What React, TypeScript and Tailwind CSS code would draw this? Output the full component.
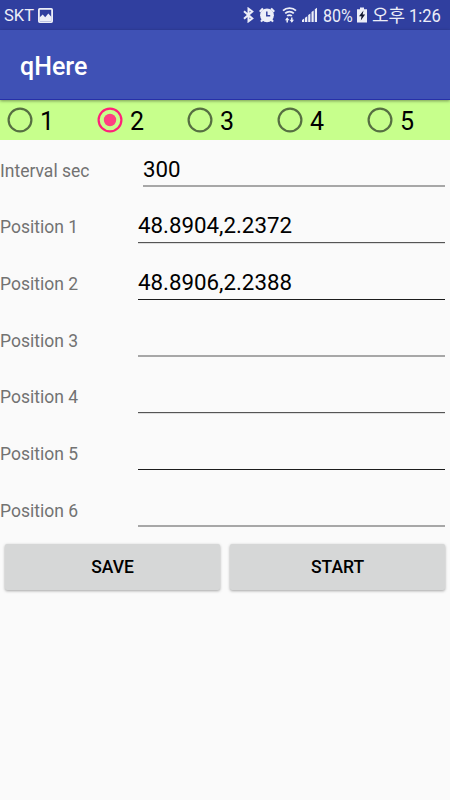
import clsx from 'clsx';

const options = [1, 2, 3, 4, 5];

const fields = [
  { label: 'Interval sec', value: '300', line: 'border-b-2 border-[#a7a7a7]', inset: true },
  { label: 'Position 1', value: '48.8904,2.2372', line: 'border-b border-[#555555] shadow-[0_1px_0_#dddddd]' },
  { label: 'Position 2', value: '48.8906,2.2388', line: 'border-b border-[#1c1c1c]' },
  { label: 'Position 3', value: '', line: 'border-b-2 border-[#a7a7a7]' },
  { label: 'Position 4', value: '', line: 'border-b border-[#555555] shadow-[0_1px_0_#dddddd]' },
  { label: 'Position 5', value: '', line: 'border-b border-[#1c1c1c]' },
  { label: 'Position 6', value: '', line: 'border-b-2 border-[#a7a7a7]' },
];

const StatusBar = () => (
  <div className="flex h-[30px] items-center bg-[#303f9f] pl-1 pr-[9px] text-[17px] text-[#eceef8]">
    <span className="pt-[2px] text-[16.5px]">SKT</span>
    <svg className="ml-1 h-[15px] w-[15px]" viewBox="0 0 15 15">
      <rect x="0.9" y="0.9" width="13.2" height="13.2" rx="0.8" fill="none" stroke="currentColor" strokeWidth="1.8" />
      <path d="M1.5 13V9.5L4.7 6.5l2.5 2.7L10.3 5.5l3.2 3.5v4z" fill="currentColor" />
    </svg>
    <div className="ml-auto flex items-center">
      <svg className="h-4 w-[11px]" viewBox="0 0 11 16" fill="none" stroke="currentColor" strokeWidth="2">
        <path d="M1 4.3 9.3 11.5 5.5 14.3V1.7L9.3 4.5 1 11.7" />
      </svg>
      <svg className="ml-[5px] h-4 w-4" viewBox="0 0 16 16">
        <circle cx="8" cy="8.3" r="6.9" fill="currentColor" />
        <path d="M.8 4.8 4 1.4M12 1.4l3.2 3.4M3.7 12.6l-1.7 2M12.3 12.6l1.7 2" stroke="currentColor" strokeWidth="2.2" />
        <path d="M7.8 4.6v4.2h3.4" fill="none" stroke="#303f9f" strokeWidth="1.5" />
      </svg>
      <svg className="ml-[7px] h-4 w-[15px]" viewBox="0 0 15 16" fill="none" stroke="currentColor" strokeWidth="1.8">
        <path d="M1 3.6C4.5.2 10.5.2 14 3.6M3.2 6.4c2.4-2.4 6.2-2.4 8.6 0M5.2 9c1.2-1.3 3.4-1.3 4.6 0" />
        <path d="M5.2 11.5v4M9.8 10.5v4" strokeWidth="1.5" />
        <path d="M5.2 10.3 7.4 13.2H3zM9.8 15.7 7.6 12.8H12z" fill="currentColor" stroke="none" />
      </svg>
      <svg className="ml-[5px] h-4 w-[15px]" viewBox="0 0 15 16" fill="currentColor">
        <path d="M0 15v-2l2.2-1.5V15zM3 10.7l2.3-1.5V15H3zM6.2 8l2.2-1.5V15H6.2zM9.5 5l2.2-1.5V15H9.5zM12.8 2.3 15 .8V15h-2.2z" />
      </svg>
      <span className="ml-[6px] w-[30px] origin-left scale-x-[0.89] whitespace-nowrap pt-px text-[18px]">80%</span>
      <svg className="ml-[4px] h-4 w-[10px]" viewBox="0 0 10 16">
        <path d="M3 .5h4v1.8h3V15.5H0V2.3h3z" fill="currentColor" />
        <path d="M6.5 3.5 2 9.2h2.5L3.8 13.5l4.3-6H5.6z" fill="#10162f" />
      </svg>
      <span className="ml-[5px] w-[33px] whitespace-nowrap text-[18px]">오후</span>
      <span className="ml-[4px] w-[32px] origin-left scale-x-[0.92] whitespace-nowrap pt-px text-[18px]">1:26</span>
    </div>
  </div>
);

const RadioOption = ({ value, checked }: { value: number; checked: boolean }) => (
  <label className="flex w-[90px] items-center pl-[7px]">
    <svg
      className={clsx('h-[26px] w-[26px]', checked ? 'text-[#ff2079]' : 'text-[#566f42]')}
      viewBox="0 0 26 26"
    >
      <circle cx="13" cy="13" r="11.4" fill="none" stroke="currentColor" strokeWidth="2.2" />
      {checked && <circle cx="13" cy="13" r="6.2" fill="#ff4081" />}
    </svg>
    <span className="ml-[7px] pt-[3px] text-[25px] leading-[30px] text-black">{value}</span>
  </label>
);

export default function App() {
  return (
    <div className="h-[800px] w-[450px] overflow-hidden bg-[#fafafa] font-[Roboto,'Noto_Sans_CJK_KR',sans-serif]">
      <StatusBar />
      <header className="relative flex h-[70px] items-center border-b border-[#2730a8] bg-[#3f51b5] pl-5 pt-[5px] shadow-[0_1px_3px_rgba(0,0,0,0.4)]">
        <h1 className="text-[25px] font-medium text-white">qHere</h1>
      </header>
      <div className="flex h-10 items-center bg-[#c7ff8c]">
        {options.map((value) => (
          <RadioOption key={value} value={value} checked={value === 2} />
        ))}
      </div>
      <div className="pt-[0.35px]">
        {fields.map(({ label, value, line, inset }) => (
          <div key={label} className="flex h-[56.67px] items-baseline pr-[5px] pt-[15.4px]">
            <span className={clsx('shrink-0 text-[17.5px] text-[#727272]', inset ? 'w-[143px]' : 'w-[138px]')}>
              {label}
            </span>
            <div className={clsx('flex-1', line)}>
              <div className="h-[29.6px] text-[22.3px] leading-[26px] text-black">{value || '\u00a0'}</div>
            </div>
          </div>
        ))}
      </div>
      <div className="flex gap-[10px] px-[5px] pt-[7px]">
        {['SAVE', 'START'].map((text) => (
          <button
            key={text}
            className="h-[46px] flex-1 rounded-[2px] bg-[#d6d7d7] pt-px text-[17.5px] font-medium text-black shadow-[0_1px_3px_rgba(0,0,0,0.35)]"
          >
            {text}
          </button>
        ))}
      </div>
    </div>
  );
}
